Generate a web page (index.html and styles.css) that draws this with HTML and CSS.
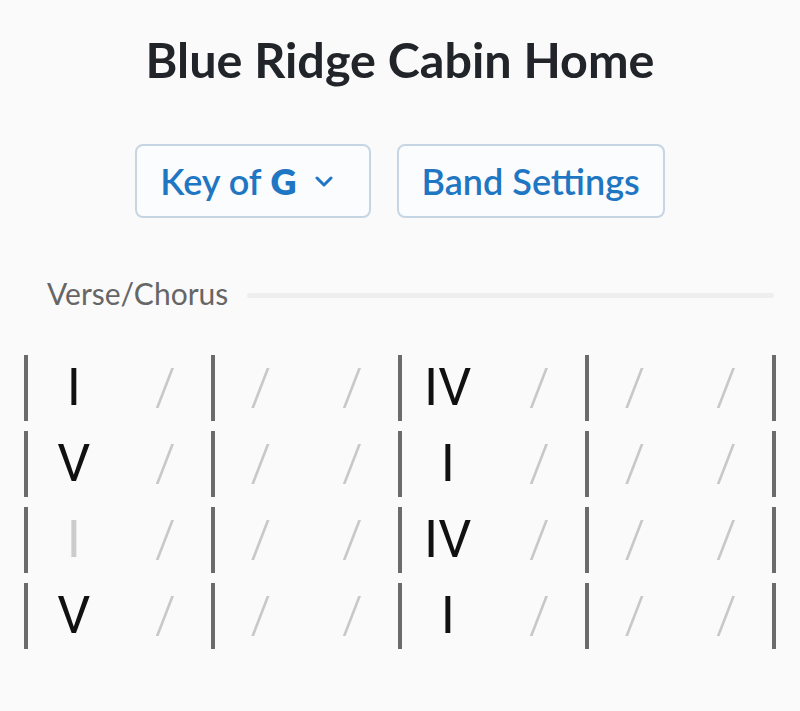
FILE: index.html
```html
<!DOCTYPE html>
<html lang="en">
<head>
    <meta charset="UTF-8">
    <meta name="viewport" content="width=device-width, initial-scale=1.0">
    <title>Blue Ridge Cabin Home</title>
    <link rel="stylesheet" href="styles.css">
</head>
<body>

    <h1 class="title">Blue Ridge Cabin Home</h1>

    <div class="toolbar">
        <button class="btn key-btn">
            Key of <b>G</b>
            <svg class="chevron" width="20" height="12" viewBox="0 0 20 12">
                <path d="M3 2 L10 9 L17 2" fill="none" stroke="currentColor" stroke-width="3" stroke-linecap="round" stroke-linejoin="round"/>
            </svg>
        </button>
        <button class="btn">Band Settings</button>
    </div>

    <div class="section">
        <div class="section-head">
            <span class="section-name">Verse/Chorus</span>
            <span class="section-rule"></span>
        </div>

        <div class="chart">
            <div class="line">
                <div class="measure"><span class="chord">I</span><span class="slash">/</span></div>
                <div class="measure"><span class="slash">/</span><span class="slash">/</span></div>
                <div class="measure"><span class="chord">IV</span><span class="slash">/</span></div>
                <div class="measure"><span class="slash">/</span><span class="slash">/</span></div>
            </div>
            <div class="line">
                <div class="measure"><span class="chord">V</span><span class="slash">/</span></div>
                <div class="measure"><span class="slash">/</span><span class="slash">/</span></div>
                <div class="measure"><span class="chord">I</span><span class="slash">/</span></div>
                <div class="measure"><span class="slash">/</span><span class="slash">/</span></div>
            </div>
            <div class="line">
                <div class="measure"><span class="chord faded">I</span><span class="slash">/</span></div>
                <div class="measure"><span class="slash">/</span><span class="slash">/</span></div>
                <div class="measure"><span class="chord">IV</span><span class="slash">/</span></div>
                <div class="measure"><span class="slash">/</span><span class="slash">/</span></div>
            </div>
            <div class="line">
                <div class="measure"><span class="chord">V</span><span class="slash">/</span></div>
                <div class="measure"><span class="slash">/</span><span class="slash">/</span></div>
                <div class="measure"><span class="chord">I</span><span class="slash">/</span></div>
                <div class="measure"><span class="slash">/</span><span class="slash">/</span></div>
            </div>
        </div>
    </div>

</body>
</html>
```

FILE: styles.css
```css
body {
    font-family: Lato, "Open Sans", sans-serif;
    background-color: #fafafa;
    margin: 0;
    color: #212529;
}

.title {
    margin: 30px 0 0;
    font-size: 48.5px;
    line-height: 58px;
    font-weight: 700;
    text-align: center;
    color: #212529;
}

.toolbar {
    display: flex;
    justify-content: center;
    gap: 26px;
    margin-top: 56px;
}

.btn {
    display: flex;
    align-items: center;
    font-family: Lato, sans-serif;
    font-size: 36px;
    line-height: 42px;
    font-weight: 600;
    color: #1f76c2;
    background: #fbfcfd;
    border: 2px solid #c6d5e4;
    border-radius: 8px;
    padding: 14px 23px;
    cursor: pointer;
}

.btn b {
    font-weight: 800;
    margin-left: 0.25em;
}

.chevron {
    margin: 2px 12px 0 17px;
}

.section {
    margin-top: 57px;
}

.section-head {
    display: flex;
    align-items: center;
    padding: 0 26px 0 47px;
}

.section-name {
    font-size: 30px;
    line-height: 36px;
    color: #666;
}

.section-rule {
    flex: 1;
    height: 5px;
    margin: 5px 0 0 19px;
    background: #eeeeee;
    border-radius: 2px;
}

.chart {
    display: flex;
    flex-direction: column;
    gap: 10px;
    padding: 0 24px;
    margin-top: 44px;
}

.line {
    display: flex;
}

.measure {
    flex: 1;
    display: grid;
    grid-template-columns: 1fr 1fr;
    border-left: 4px solid #6b6b6b;
    font-family: Roboto, sans-serif;
    font-size: 52px;
    line-height: 66px;
    text-align: center;
}

.measure:last-child {
    border-right: 4px solid #6b6b6b;
}

.chord {
    color: #111;
}

.chord.faded {
    color: #cccccc;
}

.slash {
    color: #c8c8c8;
    font-weight: 300;
}
```
